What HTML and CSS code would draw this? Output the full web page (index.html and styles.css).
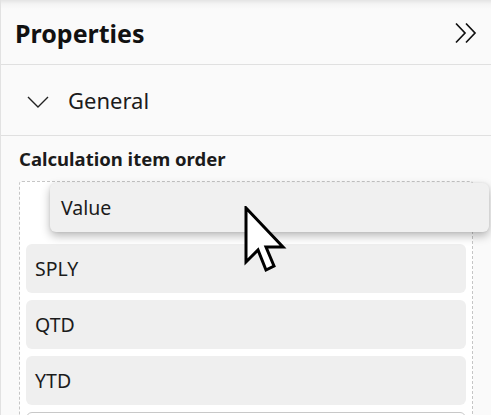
FILE: index.html
```html
<!DOCTYPE html>
<html>
<head>
<meta charset="utf-8">
<link rel="stylesheet" href="styles.css">
</head>
<body>
<div class="panel">
  <div class="header">
    <h1 class="title">Properties</h1>
    <svg class="collapse" width="24" height="22" viewBox="0 0 24 22">
      <path d="M2 1.5 L11 11 L2 20.5 M12 1.5 L21 11 L12 20.5" fill="none" stroke="#111" stroke-width="1.7"/>
    </svg>
  </div>
  <div class="group">
    <svg class="chev" width="22" height="12" viewBox="0 0 22 12">
      <path d="M1 1 L11 11 L21 1" fill="none" stroke="#222" stroke-width="1.4"/>
    </svg>
    <span class="group-label">General</span>
  </div>
  <div class="section">
    <div class="section-title">Calculation item order</div>
    <div class="dropzone">
      <div class="slot"></div>
      <div class="item">SPLY</div>
      <div class="item">QTD</div>
      <div class="item">YTD</div>
      <div class="item item-outline"></div>
    </div>
  </div>
  <div class="ghost">Value</div>
  <svg class="cursor" width="44" height="70" viewBox="0 0 44 70">
    <path d="M2 2 L2 56 L14 44 L22 64 L30 60 L22 41 L39 41 Z" fill="#fff" stroke="#000" stroke-width="3" stroke-linejoin="miter"/>
  </svg>
</div>
</body>
</html>
```
FILE: styles.css
```css
* { box-sizing: border-box; }
html, body { margin: 0; padding: 0; }
body {
  background: #fafafa;
  font-family: "Noto Sans", "Open Sans", sans-serif;
  color: #1b1b1b;
}
.panel {
  position: relative;
  width: 491px;
  height: 415px;
  overflow: hidden;
  border-left: 1px solid #e2e2e2;
  background: linear-gradient(#e4e4e4 0, #f4f4f4 4px, #fafafa 9px);
}
.header {
  height: 65px;
  border-bottom: 1px solid #e0e0e0;
  display: flex;
  align-items: center;
  justify-content: space-between;
  padding: 1px 13px 0 14px;
}
.title {
  margin: 0;
  font-size: 25px;
  font-weight: 700;
  color: #111;
}
.collapse { display: block; margin-top: 1px; }
.group {
  height: 71px;
  border-bottom: 1px solid #e0e0e0;
  display: flex;
  align-items: center;
  padding-left: 26px;
}
.chev { display: block; margin-top: 4px; }
.group-label {
  margin-left: 19px;
  font-size: 22px;
  color: #1b1b1b;
}
.section {
  padding: 10px 0 0 18px;
}
.section-title {
  font-size: 18.5px;
  font-weight: 700;
  color: #1b1b1b;
  line-height: 25px;
}
.dropzone {
  margin-top: 10px;
  width: 454px;
  border: 1px dashed #c6c6c6;
  border-radius: 3px;
  background: #fff;
  padding: 6px 6px 0 6px;
  display: flex;
  flex-direction: column;
  gap: 7px;
}
.slot { height: 49px; }
.item {
  height: 49px;
  background: #efefef;
  border-radius: 6px;
  display: flex;
  align-items: center;
  padding-left: 9px;
  font-size: 19.5px;
  color: #1b1b1b;
}
.item-outline {
  background: #fff;
  border: 1px solid #c8c8c8;
}
.ghost {
  position: absolute;
  left: 49px;
  top: 183px;
  width: 439px;
  height: 49px;
  background: #f0f0f0;
  border-radius: 6px;
  box-shadow: 0 4px 10px rgba(0,0,0,0.28), 0 0 3px rgba(0,0,0,0.08);
  display: flex;
  align-items: center;
  padding-left: 11px;
  font-size: 19.5px;
  color: #1b1b1b;
}
.cursor {
  position: absolute;
  left: 243px;
  top: 206px;
}
```
